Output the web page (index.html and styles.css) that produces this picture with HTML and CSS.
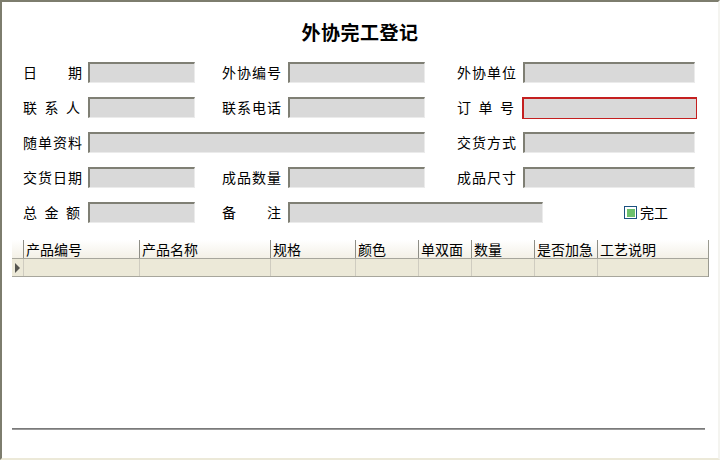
FILE: index.html
```html
<!DOCTYPE html>
<html lang="zh-CN">
<head>
<meta charset="utf-8">
<title>外协完工登记</title>
<link rel="stylesheet" href="styles.css">
</head>
<body>
<div class="window">
  <h1 class="title">外协完工登记</h1>
  <div class="form">
    <div class="field c1"><span class="label"><span>日</span><span>期</span></span><span class="input w107"></span></div>
    <div class="field c2"><span class="label">外协编号</span><span class="input w137"></span></div>
    <div class="field c3"><span class="label">外协单位</span><span class="input w172"></span></div>

    <div class="field c1"><span class="label sp"><span>联</span><span>系</span><span>人</span></span><span class="input w107"></span></div>
    <div class="field c2"><span class="label">联系电话</span><span class="input w137"></span></div>
    <div class="field c3"><span class="label sp"><span>订</span><span>单</span><span>号</span></span><span class="input w175 focus"></span></div>

    <div class="field c12"><span class="label">随单资料</span><span class="input w337"></span></div>
    <div class="field c3"><span class="label">交货方式</span><span class="input w172"></span></div>

    <div class="field c1"><span class="label">交货日期</span><span class="input w107"></span></div>
    <div class="field c2"><span class="label">成品数量</span><span class="input w137"></span></div>
    <div class="field c3"><span class="label">成品尺寸</span><span class="input w172"></span></div>

    <div class="field c1"><span class="label sp"><span>总</span><span>金</span><span>额</span></span><span class="input w107"></span></div>
    <div class="field c23"><span class="label"><span>备</span><span>注</span></span><span class="input w255"></span>
      <span class="check"><span class="box"><span class="mark"></span></span><span class="check-text">完工</span></span>
    </div>
  </div>

  <div class="grid">
    <div class="grow head">
      <div class="rh"></div>
      <div class="cell w116">产品编号</div>
      <div class="cell w131">产品名称</div>
      <div class="cell w85">规格</div>
      <div class="cell w63">颜色</div>
      <div class="cell w53">单双面</div>
      <div class="cell w63">数量</div>
      <div class="cell w63">是否加急</div>
      <div class="cell w77">工艺说明</div>
    </div>
    <div class="grow data">
      <div class="rh"><span class="arrow"></span></div>
      <div class="cell w116"></div>
      <div class="cell w131"></div>
      <div class="cell w85"></div>
      <div class="cell w63"></div>
      <div class="cell w53"></div>
      <div class="cell w63"></div>
      <div class="cell w63"></div>
      <div class="cell w77"></div>
    </div>
  </div>

  <div class="spacer"></div>
  <div class="rule"></div>
</div>
</body>
</html>
```
FILE: styles.css
```css
html, body {
  margin: 0;
  padding: 0;
  background: #ffffff;
}
body {
  font-family: "Noto Sans CJK SC", "DejaVu Sans", sans-serif;
  color: #000;
}
.window {
  box-sizing: border-box;
  width: 720px;
  height: 460px;
  border-top: 2px solid #7d7d6e;
  border-left: 2px solid #7d7d6e;
  border-right: 2px solid #f4f4f0;
  border-bottom: 2px solid #ece9d8;
  background: #fff;
  display: flex;
  flex-direction: column;
}
.title {
  margin: 17px 0 0 0;
  height: 26px;
  font-size: 19px;
  line-height: 26px;
  font-weight: bold;
  text-align: center;
  letter-spacing: 0.5px;
}
.form {
  margin: 17px 0 0 21px;
  display: grid;
  grid-template-columns: 172px 27px 203px 32px 238px;
  grid-auto-rows: 21px;
  row-gap: 14px;
}
.field {
  display: flex;
  align-items: center;
  gap: 6px;
  font-size: 14px;
  line-height: 21px;
}
.c1 { grid-column: 1; gap: 5px; }
.c2 { grid-column: 3; }
.c3 { grid-column: 5; }
.c12 { grid-column: 1 / 4; gap: 5px; }
.c23 { grid-column: 3 / 6; }
.label {
  width: 60px;
  flex: none;
  white-space: nowrap;
  display: flex;
  justify-content: space-between;
  letter-spacing: 1px;
}
.label.sp { width: 58px; padding-right: 2px; }
.input {
  box-sizing: border-box;
  height: 21px;
  flex: none;
  background: #d9d9d9;
  border-top: 2px solid #7f7f74;
  border-left: 2px solid #7f7f74;
  border-right: 1px solid #ebebeb;
  border-bottom: 1px solid #ebebeb;
}
.input.focus {
  height: 22px;
  margin-left: -1px;
  border: 1px solid #c42020;
  border-top-width: 2px;
  border-left-width: 2px;
}
.w107 { width: 107px; }
.w137 { width: 137px; }
.w172 { width: 172px; }
.w175 { width: 175px; }
.w337 { width: 337px; }
.w255 { width: 255px; }
.check {
  margin-left: 75px;
  display: flex;
  align-items: center;
  gap: 3px;
}
.box {
  box-sizing: border-box;
  width: 13px;
  height: 13px;
  border: 1px solid #1c5180;
  background: #fff;
  display: flex;
  align-items: center;
  justify-content: center;
}
.mark {
  width: 8px;
  height: 8px;
  background: #6cc06c;
}
.check-text { font-size: 14px; }

.grid {
  margin: 17px 0 0 10px;
  width: 696px;
  border-right: 1px solid #9a9a90;
}
.grow {
  display: flex;
}
.head {
  height: 18px;
  background: linear-gradient(#ffffff, #f3f0e6);
  border-bottom: 1px solid #a7a69c;
}
.head .cell {
  border-left: 1px solid #8e8e86;
  font-size: 14px;
  line-height: 18px;
  padding-left: 2px;
  white-space: nowrap;
  overflow: hidden;
}
.data {
  height: 17px;
  background: #ece9d8;
  border-bottom: 1px solid #a7a69c;
}
.data .cell {
  border-left: 1px solid #cfccc0;
}
.rh {
  box-sizing: border-box;
  width: 11px;
  flex: none;
  display: flex;
  align-items: center;
  justify-content: center;
}
.data .rh { background: #ece9d8; }
.arrow {
  width: 0;
  height: 0;
  border-top: 5px solid transparent;
  border-bottom: 5px solid transparent;
  border-left: 5px solid #555550;
}
.cell {
  box-sizing: border-box;
  flex: none;
}
.w116 { width: 116px; }
.w131 { width: 131px; }
.w85 { width: 85px; }
.w63 { width: 63px; }
.w53 { width: 53px; }
.w77 { width: 77px; }
.spacer { flex: 1; }
.rule {
  margin: 0 13px 28px 10px;
  height: 0;
  border-top: 1px solid #7a7a7a;
  border-bottom: 1px solid #9a9a9a;
}
```
